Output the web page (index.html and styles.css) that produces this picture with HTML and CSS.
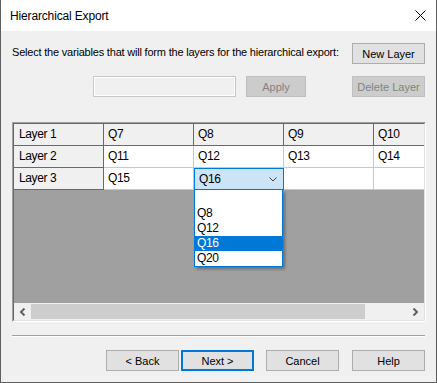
FILE: index.html
```html
<!DOCTYPE html>
<html>
<head>
  <meta charset="utf-8">
  <title>Hierarchical Export</title>
  <link rel="stylesheet" href="styles.css">
</head>
<body>
  <div class="window">
    <div class="titlebar">
      <span class="title">Hierarchical Export</span>
      <svg class="close" width="11" height="11" viewBox="0 0 11 11">
        <path d="M0.5 0.5 L10.5 10.5 M10.5 0.5 L0.5 10.5" stroke="#000" stroke-width="1" fill="none"/>
      </svg>
    </div>

    <div class="content">
      <div class="top-row">
        <p class="prompt">Select the variables that will form the layers for the hierarchical export:</p>
        <button class="btn">New Layer</button>
      </div>

      <div class="edit-row">
        <input type="text" class="layer-name" disabled/>
        <button class="btn apply" disabled>Apply</button>
        <button class="btn" disabled>Delete Layer</button>
      </div>

      <div class="grid">
        <div class="grid-inner">
          <div class="grid-view">
            <div class="gv-row">
              <div class="cell head name">Layer 1</div>
              <div class="cell head">Q7</div>
              <div class="cell head">Q8</div>
              <div class="cell head">Q9</div>
              <div class="cell head">Q10</div>
            </div>
            <div class="gv-row">
              <div class="cell head name">Layer 2</div>
              <div class="cell">Q11</div>
              <div class="cell">Q12</div>
              <div class="cell">Q13</div>
              <div class="cell">Q14</div>
            </div>
            <div class="gv-row">
              <div class="cell head name">Layer 3</div>
              <div class="cell">Q15</div>
              <div class="cell"></div>
              <div class="cell"></div>
              <div class="cell"></div>
            </div>

            <div class="combo">
              <div class="combo-box">
                <span>Q16</span>
                <svg width="8" height="5" viewBox="0 0 8 5">
                  <polyline points="0.5,0.5 4,4 7.5,0.5" stroke="#444" stroke-width="1" fill="none"/>
                </svg>
              </div>
              <ul class="combo-list">
                <li>&nbsp;</li>
                <li>Q8</li>
                <li>Q12</li>
                <li class="selected">Q16</li>
                <li>Q20</li>
              </ul>
            </div>
          </div>

          <div class="hscroll">
            <div class="arrow">
              <svg width="7" height="8" viewBox="0 0 7 8">
                <polyline points="5.5,0.5 2,4 5.5,7.5" stroke="#606060" stroke-width="2" fill="none"/>
              </svg>
            </div>
            <div class="track">
              <div class="thumb"></div>
            </div>
            <div class="arrow">
              <svg width="7" height="8" viewBox="0 0 7 8">
                <polyline points="1.5,0.5 5,4 1.5,7.5" stroke="#606060" stroke-width="2" fill="none"/>
              </svg>
            </div>
          </div>
        </div>
      </div>

      <div class="divider"></div>

      <div class="actions">
        <button class="btn">&lt; Back</button>
        <button class="btn default">Next &gt;</button>
        <button class="btn cancel">Cancel</button>
        <button class="btn help">Help</button>
      </div>
    </div>
  </div>
</body>
</html>
```

FILE: styles.css
```css
body {
  margin: 0;
  font-family: "Liberation Sans", Arial, sans-serif;
  font-size: 11px;
  color: #000;
  background: #fff;
}

.window {
  width: 437px;
  height: 383px;
  box-sizing: border-box;
  border: 1px solid #5f5f5f;
  border-top: none;
  background: #f0f0f0;
  display: flex;
  flex-direction: column;
}

.titlebar {
  height: 31px;
  flex: 0 0 31px;
  background: #fff;
  display: flex;
  align-items: center;
  justify-content: space-between;
  padding: 0 10px 0 9px;
}

.title {
  font-size: 12px;
  letter-spacing: -0.15px;
}

.content {
  flex: 1;
  padding: 12px 11px 11px;
  display: flex;
  flex-direction: column;
}

.top-row {
  display: flex;
  justify-content: space-between;
  align-items: center;
  height: 21px;
}

.prompt {
  margin: 0 0 3px;
  white-space: nowrap;
  letter-spacing: -0.2px;
}

.btn {
  width: 73px;
  height: 21px;
  padding: 0;
  box-sizing: border-box;
  border: 1px solid #adadad;
  background: #e1e1e1;
  font-family: inherit;
  font-size: 11px;
  color: #000;
}

.btn:disabled {
  background: #cccccc;
  border-color: #bfbfbf;
  color: #838383;
}

.edit-row {
  display: flex;
  justify-content: flex-end;
  margin-top: 12px;
}

.layer-name {
  width: 143px;
  height: 21px;
  box-sizing: border-box;
  margin: 0 10px 0 0;
  border: 1px solid #c8c8c8;
  box-shadow: inset 0 0 0 1px #fff;
  background: #f0f0f0;
}

.apply {
  width: 60px;
  margin-right: 46px;
}

/* data grid */
.grid {
  width: 414px;
  height: 200px;
  box-sizing: border-box;
  margin-top: 25px;
  border-top: 1px solid #a0a0a0;
  border-left: 1px solid #a0a0a0;
  border-right: 1px solid #fff;
  border-bottom: 1px solid #fff;
}

.grid-inner {
  height: 100%;
  box-sizing: border-box;
  border-top: 1px solid #696969;
  border-left: 1px solid #696969;
  border-right: 1px solid #e3e3e3;
  border-bottom: 1px solid #e3e3e3;
  display: flex;
  flex-direction: column;
}

.grid-view {
  position: relative;
  flex: 1;
  background: #a0a0a0;
  overflow: hidden;
}

.gv-row {
  display: flex;
  height: 22px;
}

.cell {
  flex: 0 0 90px;
  height: 22px;
  box-sizing: border-box;
  padding-left: 4px;
  line-height: 21px;
  font-size: 12px;
  letter-spacing: -0.4px;
  white-space: nowrap;
  background: #fff;
  border-right: 1px solid #c8c8c8;
  border-bottom: 1px solid #c8c8c8;
}

.cell.head {
  background: #f0f0f0;
  border-color: #696969;
}

.cell.name {
  padding-left: 5px;
}

/* combo editor with its open list */
.combo {
  position: absolute;
  left: 180px;
  top: 44px;
  width: 90px;
}

.combo-box {
  height: 22px;
  box-sizing: border-box;
  border: 1px solid #0078d7;
  background: #cce4f7;
  display: flex;
  align-items: center;
  justify-content: space-between;
  padding: 0 6px 0 4px;
  font-size: 12px;
  letter-spacing: -0.4px;
}

.combo-list {
  list-style: none;
  margin: 0;
  padding: 1px 0 0;
  width: 89px;
  box-sizing: border-box;
  border: 1px solid #0078d7;
  border-top: none;
  background: #fff;
  box-shadow: 2px 2px 3px rgba(0, 0, 0, 0.35);
}

.combo-list li {
  height: 15px;
  line-height: 15px;
  padding-left: 2px;
  font-size: 12px;
  letter-spacing: -0.4px;
}

.combo-list li.selected {
  background: #0078d7;
  color: #fff;
}

/* horizontal scrollbar */
.hscroll {
  height: 17px;
  flex: 0 0 17px;
  display: flex;
  background: #f0f0f0;
}

.arrow {
  width: 17px;
  display: flex;
  align-items: center;
  justify-content: center;
}

.track {
  flex: 1;
  display: flex;
  align-items: center;
}

.thumb {
  width: 334px;
  height: 15px;
  background: #cdcdcd;
}

.divider {
  height: 1px;
  margin-top: 13px;
  background: #a0a0a0;
  border-bottom: 1px solid #fff;
}

.actions {
  display: flex;
  justify-content: flex-end;
  margin-top: 13px;
}

.default {
  margin-left: 2px;
  border: 2px solid #0078d7;
}

.cancel {
  margin-left: 12px;
}

.help {
  margin-left: 13px;
}
```
